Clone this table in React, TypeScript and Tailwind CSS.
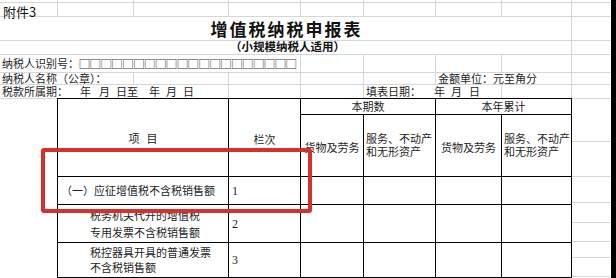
import React from "react";

// column widths of the sheet, each includes its right grid line
const COLS = [58, 76, 95, 72, 63, 72, 66, 70, 39];
const WIDTH_CLASS = [
  "w-[58px]",
  "w-[76px]",
  "w-[95px]",
  "w-[72px]",
  "w-[63px]",
  "w-[72px]",
  "w-[66px]",
  "w-[70px]",
  "w-[39px]",
];

interface SheetRowProps {
  height: string;
  lines: number[]; // which columns show their right grid line
  cells?: Record<number, React.ReactNode>;
}

function SheetRow({ height, lines, cells = {} }: SheetRowProps) {
  return (
    <div className={`flex shrink-0 border-b border-[#d6d6d6] ${height}`}>
      {COLS.map((_, i) => (
        <div
          key={i}
          className={`${WIDTH_CLASS[i]} shrink-0 flex items-center whitespace-nowrap overflow-visible ${
            lines.includes(i) ? "border-r border-[#d6d6d6]" : ""
          }`}
        >
          {cells[i]}
        </div>
      ))}
    </div>
  );
}

function MergedRow({ height, children }: { height: string; children: React.ReactNode }) {
  return (
    <div className={`flex shrink-0 border-b border-[#d6d6d6] ${height}`}>
      <div className="w-[572px] shrink-0 flex items-center justify-center border-r border-[#d6d6d6]">
        {children}
      </div>
      <div className="w-[39px] shrink-0" />
    </div>
  );
}

const cell = "bg-white flex items-center";
const boxes = Array.from({ length: 20 });

export default function App() {
  return (
    <div
      className="relative flex w-[616px] h-[278px] overflow-hidden bg-white text-[#1e1e1e] text-[11px] leading-none"
      style={{ fontFamily: '"Noto Sans CJK SC", "Noto Sans", sans-serif' }}
    >
      <div className="w-[611px] shrink-0 flex flex-col">
        {/* header area of the sheet */}
        <SheetRow height="h-[3px]" lines={[0, 1, 2, 3, 4, 5, 6, 7]} />
        <SheetRow
          height="h-[14px]"
          lines={[0, 1, 2, 3, 4, 5, 6, 7]}
          cells={{ 0: <span className="pl-[3px] mt-[4px] text-[13px] text-[#111]">附件3</span> }}
        />
        <MergedRow height="h-[24px]">
          <span className="font-bold text-[17px] tracking-[2px] text-[#111] pl-[2px]">增值税纳税申报表</span>
        </MergedRow>
        <MergedRow height="h-[14px]">
          <span className="font-bold text-[11.5px] text-[#111] -mt-[2px] pl-[4px]">（小规模纳税人适用）</span>
        </MergedRow>
        <SheetRow
          height="h-[18px]"
          lines={[3, 4, 5, 6, 7]}
          cells={{
            0: (
              <span className="pl-[2px] flex items-center">
                <span>纳税人识别号：</span>
                {boxes.map((_, i) => (
                  <span key={i} className="w-[10.9px] flex justify-center text-[12px] text-[#333]">
                    □
                  </span>
                ))}
              </span>
            ),
          }}
        />
        <SheetRow
          height="h-[12px]"
          lines={[1, 2, 3, 4, 5, 7]}
          cells={{
            0: <span className="pl-[2px]">纳税人名称（公章）：</span>,
            6: <span className="pl-[2px]">金额单位：元至角分</span>,
          }}
        />
        <SheetRow
          height="h-[14px]"
          lines={[2, 3, 4, 6, 7]}
          cells={{
            0: (
              <span className="pl-[2px] flex">
                <span>税款所属期：</span>
                <span className="ml-[12px]">年</span>
                <span className="ml-[8px]">月</span>
                <span className="ml-[6px]">日至</span>
                <span className="ml-[11px]">年</span>
                <span className="ml-[6px]">月</span>
                <span className="ml-[6px]">日</span>
              </span>
            ),
            5: (
              <span className="pl-[2px] flex">
                <span>填表日期：</span>
                <span className="ml-[13px]">年</span>
                <span className="ml-[6px]">月</span>
                <span className="ml-[7px]">日</span>
              </span>
            ),
          }}
        />

        {/* table area */}
        <div className="flex shrink-0 -mt-px">
          <div className="w-[57px] shrink-0" />
          <div className="w-[515px] shrink-0 grid grid-cols-[170px_71px_62px_71px_65px_69px] grid-rows-[15px_61px_27px_37px_34px_20px] gap-px p-px bg-black">
            <div className={`${cell} row-span-2 justify-center pt-[2px]`}>
              项<span className="ml-[7px]">目</span>
            </div>
            <div className={`${cell} row-span-2 justify-center pt-[3px]`}>栏次</div>
            <div className={`${cell} col-span-2 justify-center`}>本期数</div>
            <div className={`${cell} col-span-2 justify-center`}>本年累计</div>

            <div className={`${cell} justify-center pt-[3px]`}>货物及劳务</div>
            <div className={`${cell} pl-[2px]`}>
              <div className="leading-[13px] -mt-[2px]">
                服务、不动产
                <br />
                和无形资产
              </div>
            </div>
            <div className={`${cell} justify-center pt-[3px]`}>货物及劳务</div>
            <div className={`${cell} pl-[2px]`}>
              <div className="leading-[13px] -mt-[2px]">
                服务、不动产
                <br />
                和无形资产
              </div>
            </div>

            <div className={`${cell} pl-[3px] whitespace-nowrap`}>（一）应征增值税不含税销售额</div>
            <div className={`${cell} pl-[3px] font-['Liberation_Serif',serif] text-[12px]`}>1</div>
            <div className={cell} />
            <div className={cell} />
            <div className={cell} />
            <div className={cell} />

            <div className={`${cell} pl-[32px]`}>
              <div className="leading-[17px]">
                税务机关代开的增值税
                <br />
                专用发票不含税销售额
              </div>
            </div>
            <div className={`${cell} pl-[3px] font-['Liberation_Serif',serif] text-[12px]`}>2</div>
            <div className={cell} />
            <div className={cell} />
            <div className={cell} />
            <div className={cell} />

            <div className={`${cell} pl-[32px]`}>
              <div className="leading-[15px]">
                税控器具开具的普通发票
                <br />
                不含税销售额
              </div>
            </div>
            <div className={`${cell} pl-[3px] font-['Liberation_Serif',serif] text-[12px]`}>3</div>
            <div className={cell} />
            <div className={cell} />
            <div className={cell} />
            <div className={cell} />

            <div className={cell} />
            <div className={cell} />
            <div className={cell} />
            <div className={cell} />
            <div className={cell} />
            <div className={cell} />
          </div>

          {/* plain sheet column right of the table */}
          <div className="w-[39px] shrink-0 flex flex-col">
            <div className="h-[44px] shrink-0 border-b border-[#d6d6d6]" />
            <div className="h-[35px] shrink-0 border-b border-[#d6d6d6]" />
            <div className="h-[26px] shrink-0 border-b border-[#d6d6d6]" />
            <div className="h-[20px] shrink-0 border-b border-[#d6d6d6]" />
            <div className="h-[19px] shrink-0 border-b border-[#d6d6d6]" />
            <div className="h-[16px] shrink-0 border-b border-[#d6d6d6]" />
            <div className="h-[19px] shrink-0 border-b border-[#d6d6d6]" />
          </div>
        </div>
      </div>

      <div className="w-[5px] shrink-0 bg-black" />

      {/* red highlight drawn over the sheet */}
      <div className="absolute left-[41px] top-[148px] w-[271px] h-[65px] border-[4px] border-[#d6302b] rounded-[3px] pointer-events-none" />
    </div>
  );
}
